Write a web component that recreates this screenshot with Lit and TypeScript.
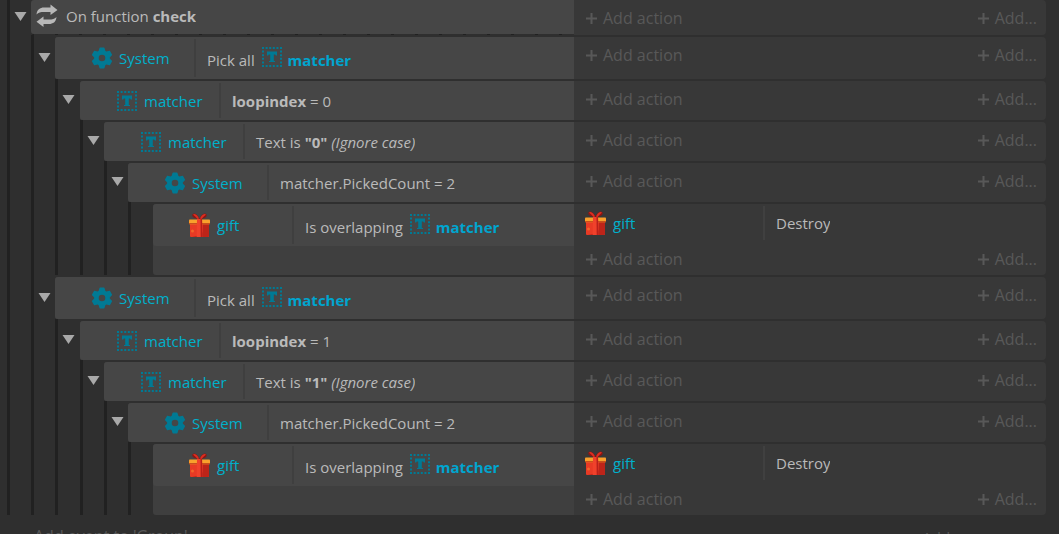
import { LitElement, html, css, svg, nothing, TemplateResult } from "lit";
import { customElement, property } from "lit/decorators.js";
import { classMap } from "lit/directives/class-map.js";

type IconName = "gear" | "text" | "gift";

interface EventRow {
  depth: number;
  object?: string;
  icon?: IconName;
  text: TemplateResult;
  tall?: boolean;
  leaf?: boolean;
}

const teeth = [0, 60, 120, 180, 240, 300];

const icons: Record<IconName, TemplateResult> = {
  gear: html`<svg class="icon" viewBox="0 0 20 20" aria-hidden="true">
    <g fill="#007a94">
      ${teeth.map(
        (a) => svg`<path d="M6 5 L7.500 0 Q7.600 -.4 8 -.4 H12 Q12.400 -.4 12.500 0 L14 5z" transform="rotate(${a} 10 10)"/>`
      )}
    </g>
    <circle cx="10" cy="10" r="5.500" fill="none" stroke="#007a94" stroke-width="4.400"/>
  </svg>`,
  text: html`<svg class="icon" viewBox="0 0 20 20" aria-hidden="true">
    <rect x="1" y="1" width="18" height="18" fill="none" stroke="#007a94" stroke-width="2" stroke-dasharray="2 1.6" stroke-dashoffset="1"/>
    <path d="M5 4.500h10v4h-1.200l-.6-1h-1.400V14h1.200v1h-6v-1h1.200V7.500H6.800l-.6 1H5z" fill="#007a94"/>
  </svg>`,
  gift: html`<svg class="icon gift" viewBox="0 0 21 26" aria-hidden="true">
    <path d="M10 7C6 7 2 4.500 3.600 2.300C5.500 0 9 3 10.500 7C12 3 15.500 0 17.300 2.300C19 4.500 15 7 11 7z" fill="#8f1511"/>
    <path d="M4 2.500C6 .5 9 4 10 6.500L8.500 7C7 5 5.500 4 4 2.500zM17 2.500C15 .5 12 4 11 6.500L12.500 7C14 5 15.500 4 17 2.500z" fill="#dd2f22"/>
    <rect x="1" y="11" width="19" height="14" rx="1" fill="#e83a25"/>
    <path d="M14 12h6v12q0 1-1 1H3q8-1 11-5z" fill="#bd2419"/>
    <rect x="0" y="7.500" width="21" height="4.700" rx=".8" fill="#f9a02c"/>
    <path d="M0 11h21v1.200H0z" fill="#c8501c"/>
    <path d="M8 7h5l.7 18H7.600z" fill="#f0412b"/>
    <path d="M11.500 7H13l.7 18h-2z" fill="#b8201a"/>
    <circle cx="3.500" cy="19" r="1.500" fill="#f2642a"/>
  </svg>`,
};

const matcherRef = html`<span class="ref">${icons.text}<b>matcher</b></span>`;

const branch = (index: number): EventRow[] => [
  { depth: 2, object: "System", icon: "gear", text: html`Pick all ${matcherRef}`, tall: true },
  { depth: 3, object: "matcher", icon: "text", text: html`<b>loopindex</b> = ${index}` },
  { depth: 4, object: "matcher", icon: "text", text: html`Text is <b>"${index}"</b> <i>(Ignore case)</i>` },
  { depth: 5, object: "System", icon: "gear", text: html`matcher.PickedCount = 2` },
  { depth: 6, object: "gift", icon: "gift", text: html`Is overlapping ${matcherRef}`, tall: true, leaf: true },
];

const rows: EventRow[] = [
  { depth: 1, text: html`On function <b>check</b>` },
  ...branch(0),
  ...branch(1),
];

const plus = html`<svg class="plus" viewBox="0 0 11 11" aria-hidden="true">
  <path d="M5.500 0v11M0 5.500h11" stroke="currentColor" stroke-width="2"/>
</svg>`;

@customElement("event-row")
export class EventRowElement extends LitElement {
  @property({ attribute: false }) row!: EventRow;

  static styles = css`
    :host { display: block; }
    .row {
      display: grid;
      grid-template-columns: minmax(0, 574fr) minmax(0, 472fr);
    }
    .left { display: flex; padding-left: 7px; }
    .guide {
      display: flex;
      flex: none;
      box-sizing: border-box;
      width: 24px;
      border-left: 3px solid #212121;
    }
    .guide:nth-child(3n) { width: 25px; }
    .toggle {
      flex: 1;
      padding: 0 0 0 4px;
      border: 0;
      background: none;
      text-align: left;
      cursor: pointer;
    }
    .toggle svg { display: block; width: 13px; height: 9px; }
    .conditions {
      flex: 1;
      min-width: 0;
      margin-top: 2px;
      border-radius: 3px 0 0 3px;
      background: #3f3f3f;
    }
    .condition {
      display: flex;
      align-items: center;
      box-sizing: border-box;
      min-height: 39px;
      border-radius: 3px 0 0 3px;
      background: #464646;
    }
    .tall .condition { min-height: 42px; }
    .object { display: flex; align-items: center; gap: 7px; color: #00b0cb; }
    .condition .object {
      align-self: stretch;
      box-sizing: border-box;
      width: 141px;
      margin: 2px 0;
      padding-left: 37px;
      border-right: 2px solid #3f3f3f;
    }
    .text { padding-left: 11px; white-space: nowrap; overflow: hidden; }
    .tall .condition .text { padding-top: 2px; }
    .icon { flex: none; width: 20px; height: 20px; overflow: visible; }
    .gift { width: 21px; height: 26px; margin-left: -1px; }
    .ref { color: #00a5cf; }
    .ref .icon { margin: 0 6px 0 3px; vertical-align: -1px; }
    .actions {
      margin-top: 2px;
      padding-top: 2px;
      border-radius: 0 4px 4px 0;
      background: #383838;
    }
    .action { display: flex; height: 34px; margin-bottom: 3px; }
    .action .object {
      box-sizing: border-box;
      width: 191px;
      padding-left: 12px;
      border-right: 2px solid #404040;
    }
    .action .text { line-height: 34px; }
    .adders { display: flex; justify-content: space-between; padding: 0 9px 0 12px; }
    .add {
      display: flex;
      align-items: center;
      gap: 6px;
      height: 32px;
      padding: 0;
      border: 0;
      background: none;
      color: #585858;
      font: inherit;
      font-size: 16px;
      cursor: pointer;
    }
    .plus { width: 11px; height: 11px; }
    .root .conditions, .root .actions { margin-top: 0; }
    .root .actions { padding-bottom: 1px; }
    .root .conditions {
      background: #2f2f2f linear-gradient(to right, #212121 3px, #2f2f2f 3px) left bottom / 24px 1px repeat-x;
    }
    .root .condition { min-height: 34px; padding: 0 0 2px 5px; }
    .root .text { padding-left: 8px; }
    .root .toggle { padding-bottom: 3px; }
    .loop { flex: none; width: 22px; height: 24px; }
  `;

  render() {
    const { depth, object, icon, text, tall = false, leaf = false } = this.row;
    const guides = Array.from({ length: depth }, (_, i) => i === depth - 1);
    return html`<div class=${classMap({ row: true, tall, root: depth === 1 })}>
      <div class="left">
        ${guides.map(
          (last) => html`<div class="guide">
            ${last && !leaf
              ? html`<button class="toggle" aria-label="Collapse event">
                  <svg viewBox="0 0 13 9" aria-hidden="true"><path d="M.5 0h12l-6 9z" fill="#a9a9a9"/></svg>
                </button>`
              : nothing}
          </div>`
        )}
        <div class="conditions">
          <div class="condition">
            ${icon
              ? html`<div class="object">${icons[icon]}<span>${object}</span></div>`
              : html`<svg class="loop" viewBox="0 0 22 24" aria-hidden="true">
                  <path d="M.5 10.500C1 5.500 4 3.500 8 3.500H14.500V.5L21.500 6L14.500 11V8H8C4.500 8 2.500 8.500 .5 10.500z" fill="#b8b8b8"/>
                  <path d="M20.500 13C20 18 17 20 13 20H7.500V23L.5 17.800L7.500 12.500V15.500H13C16.500 15.500 18.500 15 20.500 13z" fill="#b8b8b8"/>
                </svg>`}
            <div class="text">${text}</div>
          </div>
        </div>
      </div>
      <div class="actions">
        ${leaf
          ? html`<div class="action">
              <div class="object">${icons.gift}<span>gift</span></div>
              <div class="text">Destroy</div>
            </div>`
          : nothing}
        <div class="adders">
          <button class="add">${plus}<span>Add action</span></button>
          <button class="add">${plus}<span>Add...</span></button>
        </div>
      </div>
    </div>`;
  }
}

@customElement("app-root")
export class AppRoot extends LitElement {
  static styles = css`
    :host {
      display: block;
      box-sizing: border-box;
      height: 100vh;
      overflow: hidden;
      padding-right: 13px;
      background: #2f2f2f;
      color: #bababa;
      font: 15px/22px "Open Sans", "Noto Sans", sans-serif;
    }
    .footer {
      display: flex;
      align-items: flex-end;
      justify-content: space-between;
      height: 32px;
      padding: 0 84px 0 34px;
    }
    .link {
      padding: 0;
      border: 0;
      background: none;
      color: #585858;
      font: inherit;
      cursor: pointer;
    }
    .wide { font-size: 16px; }
    .drop { line-height: 20px; }
  `;

  render() {
    return html`
      ${rows.map((row) => html`<event-row .row=${row}></event-row>`)}
      <div class="footer">
        <button class="link wide">Add event to 'Group'</button>
        <button class="link drop">Add...</button>
      </div>
    `;
  }
}
